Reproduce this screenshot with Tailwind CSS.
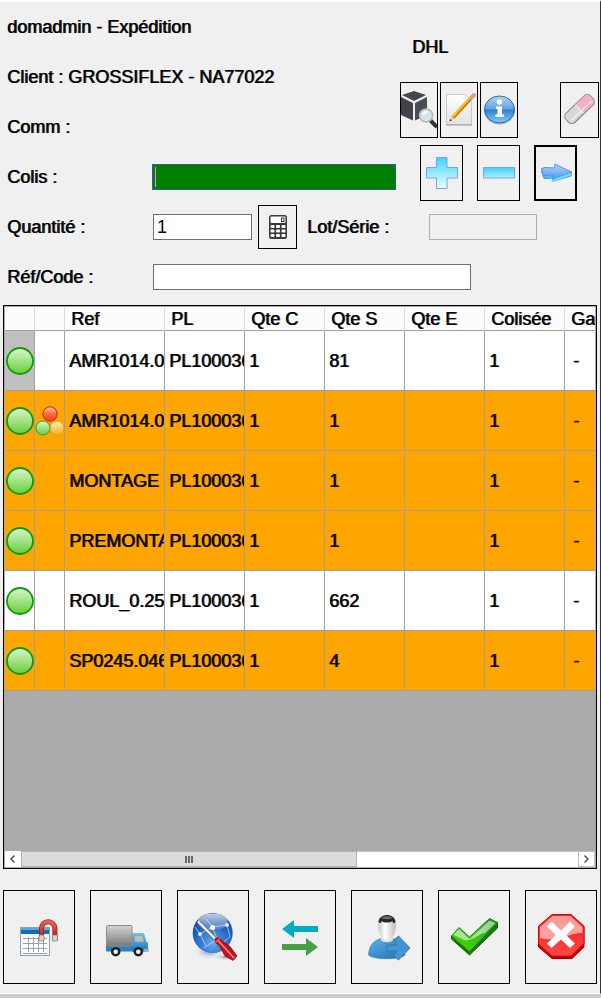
<!DOCTYPE html>
<html lang="fr">
<head>
<meta charset="utf-8">
<title>Expédition</title>
<meta name="viewport" content="width=device-width, initial-scale=1">
<script src="https://cdn.jsdelivr.net/npm/@tailwindcss/browser@4"></script>
</head>
<body class="flex min-h-screen flex-col bg-[#cdcdcd] pb-1 font-['Liberation_Sans',Arial,sans-serif] text-[18px] leading-6 text-black [text-shadow:1px_0_0_rgb(0_0_0/0.8)]">
<main class="flex grow flex-col border-t-2 border-r border-b border-t-white border-r-[#333] border-b-white bg-[#f0f0f0]">

  <header class="flex justify-between pl-[7px]">
    <div class="flex flex-col gap-[26px] pt-[13px]">
      <h1>domadmin - Expédition</h1>
      <p>Client : GROSSIFLEX - NA77022</p>
      <p>Comm :</p>
    </div>
    <div class="flex flex-col pt-[33px] pr-px">
      <p class="pl-3">DHL</p>
      <div class="mt-[23px] flex gap-[2px]">
        <button type="button" aria-label="Rechercher un colis" class="h-[56px] w-[38px] border border-black">
          <svg class="h-[54px] w-[36px]" viewBox="0 0 36 54">
            <path d="M13 8 25 12 13 18 1 12Z" fill="#45474f"/>
            <path d="M0 14 12 20V37.500L0 32Z" fill="#41434b"/>
            <path d="M14 20 26 14V32L14 37.500Z" fill="#4a4c55"/>
            <path d="M29 37 36 44" stroke="#333" stroke-width="4"/>
            <circle cx="25" cy="32.500" r="6.500" fill="#d3e4ee" stroke="#b4b8bc" stroke-width="1.500"/>
            <path d="M21 32c0-3 3-5 6-4-1 3-3 4-6 4Z" fill="#f7fbfd"/>
          </svg>
        </button>
        <button type="button" aria-label="Modifier" class="h-[56px] w-[38px] border border-black">
          <svg class="h-[54px] w-[36px]" viewBox="0 0 36 54">
            <defs><linearGradient id="paper" x1="0" y1="0" x2="0" y2="1"><stop offset="0" stop-color="#fff"/><stop offset="1" stop-color="#e2e2e2"/></linearGradient></defs>
            <path d="M5.500 11.500H24L30.500 18V41.500H5.500Z" fill="url(#paper)" stroke="#c8c8c8"/>
            <path d="M5 42H31" stroke="#999"/>
            <path d="M24 11.500 25 17 30.500 18" fill="#fff" stroke="#ddd"/>
            <path d="M12 34.500 29.500 15.500" stroke="#c97a00" stroke-width="4"/>
            <path d="M11.500 33.800 29 14.800" stroke="#ffc22e" stroke-width="2"/>
            <path d="M29.500 15.500 31 14" stroke="#b9b9b9" stroke-width="4"/>
            <path d="M31.500 13.500 33 12" stroke="#e09a80" stroke-width="4" stroke-linecap="round"/>
            <path d="M10.300 33.200 13.500 36 8.500 38Z" fill="#eccb96"/>
            <path d="M9.200 36 11 37.500 8.500 38.200Z" fill="#222"/>
          </svg>
        </button>
        <button type="button" aria-label="Informations" class="h-[56px] w-[38px] border border-black">
          <svg class="h-[54px] w-[36px]" viewBox="0 0 36 54">
            <defs><linearGradient id="info" x1="0" y1="0" x2="0" y2="1"><stop offset="0" stop-color="#b5d6f2"/><stop offset=".48" stop-color="#5fa3e0"/><stop offset=".52" stop-color="#2f7fd0"/><stop offset="1" stop-color="#7fd0fa"/></linearGradient></defs>
            <ellipse cx="18.500" cy="27.500" rx="15.500" ry="14" fill="#b5b5b5"/>
            <ellipse cx="18.500" cy="26.500" rx="15" ry="13.500" fill="url(#info)" stroke="#2a69b0"/>
            <circle cx="18.500" cy="19" r="2.800" fill="#fff"/>
            <path d="M15 23.500h6v8h2v2.500h-8.500v-2.500h2v-5.500H15Z" fill="#fff"/>
          </svg>
        </button>
        <button type="button" aria-label="Effacer" class="ml-[40px] h-[56px] w-[39px] border border-black">
          <svg class="h-[54px] w-[37px]" viewBox="0 0 37 54">
            <g transform="rotate(-44 19 26.500)">
              <rect x="2" y="20" width="34" height="13" rx="5" fill="#a8a8a8"/>
              <rect x="2" y="19.500" width="34" height="12.500" rx="4.500" fill="#d9d9d9" stroke="#8a8a8a"/>
              <path d="M19 20h12a4 4 0 0 1 4.500 4v3.500a4 4 0 0 1-4.500 4H19Z" fill="#f3b0ca"/>
              <path d="M5 28.500H33" stroke="#fff" stroke-opacity=".8"/>
              <path d="M19 20V31.500" stroke="#eee"/>
            </g>
          </svg>
        </button>
      </div>
    </div>
  </header>

  <form class="flex flex-col pl-[7px]">
    <div class="mt-[6px] flex items-end pr-[23px]">
      <label for="colis" class="flex h-12 w-[145px] items-center">Colis :</label>
      <div class="flex h-12 flex-1 items-center">
        <input id="colis" type="text" autofocus class="h-[26px] w-full min-w-0 border border-[#2a5f8f] bg-[#008000] bg-[linear-gradient(#ff7fff,#ff7fff)] bg-[length:1px_20px] bg-[position:2px_center] bg-no-repeat px-[3px] text-white caret-[#ff7fff] outline-none">
      </div>
      <div class="ml-6 flex gap-[14px]">
        <button type="button" aria-label="Ajouter" class="h-[56px] w-[43px] border border-black">
          <svg class="h-[54px] w-[41px]" viewBox="0 0 41 54">
            <defs><linearGradient id="plus" x1="0" y1="0" x2="0" y2="1"><stop offset="0" stop-color="#3cd4ff"/><stop offset="1" stop-color="#f4fcff"/></linearGradient></defs>
            <path d="M15.500 11.500h10.500v10h10.500v10.500H26v10.500H15.500V32H5.500V21.500h10Z" fill="url(#plus)" stroke="#6fa5ee"/>
          </svg>
        </button>
        <button type="button" aria-label="Retirer" class="h-[56px] w-[43px] border border-black">
          <svg class="h-[54px] w-[41px]" viewBox="0 0 41 54">
            <defs><linearGradient id="minus" x1="0" y1="0" x2="0" y2="1"><stop offset="0" stop-color="#3cd0ff"/><stop offset="1" stop-color="#b4ecff"/></linearGradient></defs>
            <path d="M5.500 21.500h31v10.500h-31Z" fill="url(#minus)" stroke="#6fa5ee"/>
          </svg>
        </button>
        <button type="submit" aria-label="Valider le colis" class="h-[56px] w-[43px] border-2 border-black">
          <svg class="h-[52px] w-[39px]" viewBox="0 0 39 52">
            <defs><linearGradient id="go" x1="0" y1="0" x2="0" y2="1"><stop offset="0" stop-color="#b9cdf8"/><stop offset="1" stop-color="#4a9ff4"/></linearGradient></defs>
            <path d="M5.500 24 8 31.500 17 31 16 34.500 35 29 35.500 25Z" fill="#35c6fb" stroke="#4b96e6"/>
            <path d="M5.500 21.500 9 20.500 18.500 21 19 17 35.500 25 17 32 17.500 28 7.500 28.500Z" fill="url(#go)" stroke="#5b8fe4"/>
            <path d="M16 34 35 27" stroke="#6fe0ff" stroke-width="2"/>
          </svg>
        </button>
      </div>
    </div>

    <div class="mt-1 flex items-center">
      <label for="quantite" class="w-[146px]">Quantité :</label>
      <input id="quantite" type="text" value="1" class="h-[26px] w-[99px] border border-[#707070] bg-white px-[3px] outline-none">
      <button type="button" aria-label="Calculatrice" class="ml-[6px] h-[44px] w-[39px] border border-black">
        <svg class="h-[42px] w-[37px]" viewBox="0 0 37 42">
          <rect x="10" y="9" width="18" height="24" rx="2.500" fill="#3b393d"/>
          <rect x="11.500" y="10.500" width="15" height="6.500" rx="1" fill="#fff"/>
          <rect x="22.500" y="12" width="2.500" height="3.500" fill="none" stroke="#3b393d"/>
          <g fill="#fff"><rect x="11.500" y="19" width="4" height="3" rx="1"/><rect x="17" y="19" width="4" height="3" rx="1"/><rect x="22.500" y="19" width="4" height="3" rx="1"/><rect x="11.500" y="23.500" width="4" height="3" rx="1"/><rect x="17" y="23.500" width="4" height="3" rx="1"/><rect x="22.500" y="23.500" width="4" height="3" rx="1"/><rect x="11.500" y="28" width="4" height="3" rx="1"/><rect x="17" y="28" width="4" height="3" rx="1"/><rect x="22.500" y="28" width="4" height="3" rx="1"/></g>
        </svg>
      </button>
      <label for="lot" class="ml-[10px] w-[122px]">Lot/Série :</label>
      <input id="lot" type="text" disabled class="h-[26px] w-[108px] border border-[#abadb3] bg-[#f0f0f0] px-[3px]">
    </div>

    <div class="mt-[15px] flex items-center">
      <label for="ref" class="w-[146px]">Réf/Code :</label>
      <input id="ref" type="text" class="h-[26px] w-[318px] border border-[#707070] bg-white px-[3px] outline-none">
    </div>
  </form>

  <section class="mx-[3px] mt-[15px] flex grow flex-col border border-black bg-[#ababab] px-px pb-px">
    <div class="grow overflow-hidden pt-px">
      <table class="w-[610px] table-fixed border-separate border-spacing-0 text-left whitespace-nowrap [&_td]:overflow-hidden [&_td]:border-r [&_td]:border-b [&_td]:border-[#a0a0a0] [&_td]:py-0 [&_td]:pl-1 [&_th]:overflow-hidden [&_th]:border-r [&_th]:border-b [&_th]:border-r-[#dcdcdc] [&_th]:border-b-[#a0a0a0] [&_th]:py-0 [&_th]:pl-[6px] [&_th]:leading-5 [&_th]:font-normal">
        <colgroup><col class="w-[30px]"><col class="w-[30px]"><col class="w-[100px]"><col class="w-[80px]"><col class="w-[80px]"><col class="w-[80px]"><col class="w-[80px]"><col class="w-[80px]"><col class="w-[50px]"></colgroup>
        <thead>
          <tr class="h-[24px] bg-[#fcfcfc]"><th></th><th></th><th>Ref</th><th>PL</th><th>Qte C</th><th>Qte S</th><th>Qte E</th><th>Colisée</th><th>Ga</th></tr>
        </thead>
        <tbody id="lignes"></tbody>
      </table>
    </div>
    <div class="flex h-4 bg-white" role="scrollbar" aria-controls="lignes" aria-orientation="horizontal" aria-valuenow="0">
      <button type="button" aria-label="Défiler à gauche" class="h-4 w-4 bg-white">
        <svg class="h-4 w-4" viewBox="0 0 16 16"><path d="M9.500 4.500 6 8l3.500 3.500" fill="none" stroke="#555" stroke-width="1.500"/></svg>
      </button>
      <div class="flex h-4 basis-[336px] items-center justify-center gap-px border border-[#b0b0b0] bg-[#dcdcdc]"><i class="h-[7px] w-[2px] bg-[#666]"></i><i class="h-[7px] w-[2px] bg-[#666]"></i><i class="h-[7px] w-[2px] bg-[#666]"></i></div>
      <div class="grow border-t border-[#c0c0c0]"></div>
      <button type="button" aria-label="Défiler à droite" class="h-4 w-[17px] border border-[#c0c0c0] bg-white">
        <svg class="h-[14px] w-[15px]" viewBox="0 0 15 14"><path d="M5.500 3.500 9 7l-3.500 3.500" fill="none" stroke="#555" stroke-width="1.500"/></svg>
      </button>
    </div>
  </section>

  <footer class="grid grid-cols-7 gap-[15px] px-[3px] pt-[21px] pb-[9px] [&_button]:flex [&_button]:h-[94px] [&_button]:items-center [&_button]:justify-center [&_button]:border [&_button]:border-black [&_svg]:h-[92px] [&_svg]:w-[70px]">
    <button type="button" aria-label="Planning">
      <svg viewBox="0 0 70 92">
        <defs><linearGradient id="mag" x1="0" y1="0" x2="0" y2="1"><stop offset="0" stop-color="#e8625e"/><stop offset="1" stop-color="#b80f0c"/></linearGradient></defs>
        <rect x="16.500" y="36.500" width="29" height="28" fill="#f4f6f8" stroke="#8fa0b0"/>
        <path d="M17 37H45V43H17Z" fill="#0b6cc0"/><path d="M17 37H45V39H17Z" fill="#59a8e0"/>
        <path d="M19 46.500H43V61.500H19Z" fill="#fff"/>
        <path d="M19 47.500H43M19 52.500H43M19 57.500H43M19 62.500H43M24.500 46V61M29.500 46V61M34.500 46V61M39.500 46V61" stroke="#9a9fa5"/>
        <path d="M37.500 49V37.500a6.700 6.700 0 0 1 13.400 0V49" fill="none" stroke="#9e1714" stroke-width="5"/>
        <path d="M37.500 49V37.500a6.700 6.700 0 0 1 13.400 0V49" fill="none" stroke="url(#mag)" stroke-width="3.500"/>
        <path d="M35 44h5v6h-5ZM48.400 44h5v6h-5Z" fill="#d5d5d5" stroke="#777" stroke-width=".7"/>
      </svg>
    </button>
    <button type="button" aria-label="Transport">
      <svg viewBox="0 0 70 92">
        <defs><linearGradient id="cargo" x1="0" y1="0" x2="0" y2="1"><stop offset="0" stop-color="#d4d4d4"/><stop offset="1" stop-color="#77797b"/></linearGradient><linearGradient id="cab" x1="0" y1="0" x2="0" y2="1"><stop offset="0" stop-color="#6ac6ea"/><stop offset="1" stop-color="#1a76b8"/></linearGradient></defs>
        <path d="M15 54H43V60.500H16a1 1 0 0 1-1-1Z" fill="#2385c4"/>
        <path d="M41 43a1 1 0 0 1 1-1H51.500a2 2 0 0 1 2 1.500L55 50l2 2V60.500H41Z" fill="url(#cab)"/>
        <rect x="15.500" y="34.500" width="25.500" height="20.500" rx="1" fill="url(#cargo)" stroke="#8b8d8f"/>
        <path d="M43.500 44.500H51.500L53 51H43.500Z" fill="#b9c0c5" stroke="#7c99a9" stroke-width=".7"/>
        <path d="M53 58h5v2.500h-5Z" fill="#a9b4bc"/>
        <circle cx="24.700" cy="60.700" r="4.800" fill="#222"/><circle cx="24.700" cy="60.700" r="2.300" fill="#f0f0f0"/>
        <circle cx="47.300" cy="60.700" r="4.800" fill="#222"/><circle cx="47.300" cy="60.700" r="2.300" fill="#f0f0f0"/>
      </svg>
    </button>
    <button type="button" aria-label="Paramètres réseau">
      <svg viewBox="0 0 70 92">
        <defs><radialGradient id="globe" cx=".5" cy=".75" r=".8"><stop offset="0" stop-color="#63aaf0"/><stop offset=".55" stop-color="#2464c4"/><stop offset="1" stop-color="#123f97"/></radialGradient><linearGradient id="gloss" x1="0" y1="0" x2="0" y2="1"><stop offset="0" stop-color="#fff" stop-opacity=".75"/><stop offset="1" stop-color="#fff" stop-opacity=".1"/></linearGradient><radialGradient id="gshadow"><stop offset="0" stop-color="#8a9dc0"/><stop offset="1" stop-color="#f0f0f0" stop-opacity="0"/></radialGradient></defs>
        <ellipse cx="31" cy="61" rx="17" ry="8" fill="url(#gshadow)"/><ellipse cx="47" cy="66" rx="12" ry="4" fill="url(#gshadow)"/>
        <circle cx="34.700" cy="42" r="20" fill="url(#globe)"/>
        <ellipse cx="34.700" cy="31" rx="15" ry="8.500" fill="url(#gloss)"/>
        <path d="M22 43 34.500 36 49 34M34.500 36 28 28M34.500 36 39 48 26 57M22 43 28 55M49 34 52 46 42 54M22 43 17 36" fill="none" stroke="#d4e6fb" stroke-opacity=".7"/>
        <circle cx="34.500" cy="36.500" r="2.500" fill="#fff"/><circle cx="22" cy="43" r="2" fill="#e5f1ff"/><circle cx="49" cy="34" r="2" fill="#e5f1ff"/>
        <path d="M21 31.500 39 49.500" stroke="#666" stroke-width="3.500"/><path d="M20 30.500 39 49.500" stroke="#f7f3ee" stroke-width="2.300"/>
        <path d="M37 47.500 41 46.500 45 50.500 52 55.500 59 65 55 69.500 47 65 41.500 55 37.500 51.500Z" fill="#c51017" stroke="#7e0509" stroke-width=".7"/>
        <path d="M40 49.500 56 67" stroke="#ff8a86" stroke-width="1.700"/><path d="M37.500 51.500 42 47" stroke="#ff5350" stroke-width="1.500"/>
      </svg>
    </button>
    <button type="button" aria-label="Transférer">
      <svg viewBox="0 0 70 92">
        <path d="M17 38 29 29V35H53V41H29V47Z" fill="#00acc1"/>
        <path d="M53 56 41 47V53H17V59H41V65Z" fill="#43a047"/>
      </svg>
    </button>
    <button type="button" aria-label="Changer d'utilisateur">
      <svg viewBox="0 0 70 92">
        <defs><linearGradient id="body" x1="0" y1="0" x2="1" y2="1"><stop offset="0" stop-color="#5eb2e6"/><stop offset="1" stop-color="#1d6fb2"/></linearGradient><linearGradient id="face" x1="0" y1="0" x2="1" y2="0"><stop offset="0" stop-color="#c9c9c9"/><stop offset=".4" stop-color="#fff"/><stop offset="1" stop-color="#bdbdbd"/></linearGradient></defs>
        <path d="M16.500 64C17 54 22 49.500 29 47.500H41c7 2 11 8 12 16.500-5 5-32 5-36.500 0Z" fill="url(#body)" stroke="#2e7fb9" stroke-width=".6"/>
        <path d="M29 44H41V49c-2 3-10 3-12 0Z" fill="#e3e3e3"/>
        <path d="M26 33c0-6 4-9 9-9s9 3 9 9c0 9-3 16-9 16s-9-7-9-16Z" fill="url(#face)"/>
        <path d="M26.500 31C27 26 31 24 35 24s8 2 8.500 7c-2 2-3 1-3-1-3 2-8 2-11 0 0 2-1 3-3 1Z" fill="#2b2625"/>
        <path d="M29 27c3-2.500 9-2.500 12 0-3 1.500-9 1.500-12 0Z" fill="#716b69"/>
        <path d="M35 54H45L42 49 46.500 45 58 57 46.500 69 41.500 64.500 45 60H35Z" fill="#3d97d3" stroke="#49718f" stroke-width=".9"/>
      </svg>
    </button>
    <button type="button" aria-label="Valider">
      <svg viewBox="0 0 70 92">
        <defs><linearGradient id="ok" x1="0" y1="1" x2="1" y2="0"><stop offset="0" stop-color="#46e000"/><stop offset=".5" stop-color="#3cc010"/><stop offset="1" stop-color="#168a20"/></linearGradient></defs>
        <path d="M12.500 45V48L30.500 64 58.500 37V31L30.500 58Z" fill="#187a0c" stroke="#115c08"/>
        <path d="M12.500 45 20 36.500 30.500 46 50.500 27.500 58.500 31.500 30.500 60.500Z" fill="url(#ok)" stroke="#1d8a12"/>
        <path d="M14 44 20 38 30.500 48 50.500 29.500 56.500 32 46 42C39 43 33 51 25 49 21 47 18 45 14 44Z" fill="#fff" fill-opacity=".55"/>
      </svg>
    </button>
    <button type="button" aria-label="Annuler">
      <svg viewBox="0 0 70 92">
        <defs><linearGradient id="stop" x1="0" y1="0" x2="0" y2="1"><stop offset="0" stop-color="#f01c1c"/><stop offset="1" stop-color="#ff4848"/></linearGradient></defs>
        <path d="M12.500 36V56L26 67.500H46L58 56V36Z" fill="#c90000" stroke="#a40000"/>
        <path d="M26 23.500H45L58 35V52.500L45 65H26L12.500 53V35Z" fill="url(#stop)" stroke="#d60808"/>
        <path d="M26.500 25H44.500L56.500 36V42C44 41 34 52 14 47V36Z" fill="#fff" fill-opacity=".55"/>
        <path d="M25.500 30.500 35 39.500 44 30.500 49 35.500 40 44 49 52.500 44 57 35 48.500 25.500 57 21 52.500 30 44 21 35.500Z" fill="#fff"/>
      </svg>
    </button>
  </footer>
</main>

<template id="rond">
  <svg class="-ml-1 block h-[30px] w-[30px]" viewBox="0 0 30 30" role="img" aria-label="Disponible"><circle cx="15" cy="15" r="13" fill="url(#vert)" stroke="#0d9a0d" stroke-width="1.800"/></svg>
</template>
<template id="trois">
  <svg class="-ml-1 block h-[30px] w-[30px]" viewBox="0 0 30 30" role="img" aria-label="Composé">
    <circle cx="8" cy="22" r="7" fill="url(#vert)" stroke="#2f9a2f"/>
    <circle cx="22" cy="22" r="7" fill="url(#jaune)" stroke="#e39a1c"/>
    <circle cx="15" cy="8" r="7.200" fill="url(#rouge)" stroke="#b32a10"/>
  </svg>
</template>
<svg class="absolute h-0 w-0" aria-hidden="true"><defs>
  <linearGradient id="vert" x1="0" y1="0" x2="0" y2="1"><stop offset="0" stop-color="#daf7cf"/><stop offset="1" stop-color="#66ce38"/></linearGradient>
  <linearGradient id="jaune" x1="0" y1="0" x2="0" y2="1"><stop offset="0" stop-color="#ffeeb8"/><stop offset="1" stop-color="#ffae22"/></linearGradient>
  <linearGradient id="rouge" x1="0" y1="0" x2="0" y2="1"><stop offset="0" stop-color="#ffc9b8"/><stop offset=".5" stop-color="#ff6a40"/><stop offset="1" stop-color="#ff3a08"/></linearGradient>
</defs></svg>
<script>
  // Lignes de la commande : réf., PL, Qte C, Qte S, Colisée, surlignée
  const lignes = [
    ["AMR1014.0", "PL100036", "1", "81", "1", false],
    ["AMR1014.0", "PL100036", "1", "1", "1", true],
    ["MONTAGE", "PL100036", "1", "1", "1", true],
    ["PREMONTA", "PL100036", "1", "1", "1", true],
    ["ROUL_0.25", "PL100036", "1", "662", "1", false],
    ["SP0245.046", "PL100036", "1", "4", "1", true]
  ];
  const rond = document.getElementById("rond").innerHTML;
  const trois = document.getElementById("trois").innerHTML;
  document.getElementById("lignes").innerHTML = lignes.map((l, i) =>
    `<tr class="h-[60px] ${l[5] ? "bg-[#ffa500]" : "bg-white"}">
      <td class="${i === 0 ? "bg-[#c0c0c0]" : ""}">${rond}</td>
      <td>${i === 1 ? trois : ""}</td>
      <td>${l[0]}</td><td>${l[1]}</td><td>${l[2]}</td><td>${l[3]}</td><td></td><td>${l[4]}</td><td><span class="pl-1">-</span></td>
    </tr>`).join("");
  document.getElementById("colis").focus();
</script>
</body>
</html>
